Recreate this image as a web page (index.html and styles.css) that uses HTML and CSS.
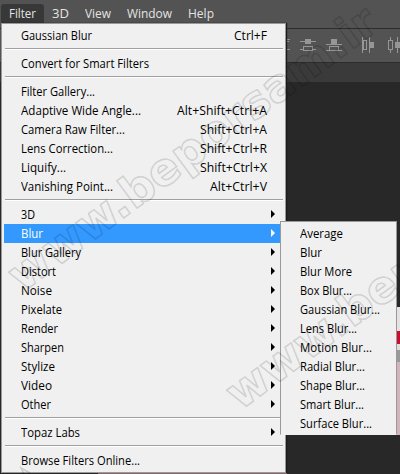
FILE: index.html
```html
<!DOCTYPE html>
<html lang="en"><head><meta charset="utf-8"><title>Filter</title><link rel="stylesheet" href="styles.css"></head>
<body>
<div class="app">
<nav class="bar"><span class="tab on"><span class="fit" data-w="27">Filter</span></span><span class="tab"><span class="fit" data-w="17">3D</span></span><span class="tab"><span class="fit" data-w="26">View</span></span><span class="tab"><span class="fit" data-w="45">Window</span></span><span class="tab"><span class="fit" data-w="26">Help</span></span></nav>
<div class="options">
<svg class="tools" width="114" height="33" viewBox="286 29 114 33" shape-rendering="crispEdges"><g fill="none" stroke="#969696"><path d="M286 39.5h4M286 41.5h3M286 49.5h4M300 41.5h16M300 49.500h3M313 49.500h3M303.500 46.500h9v4h-9zM326 44.500h16M329.500 46.500h9v4h-9zM326 50.500h16M362.500 37v16M363.500 40.500h3v9h-3zM369.500 37v16M390.500 37v3M390.500 50v3M388.500 40.500h4v9h-4zM397.500 37v16"/></g><path fill="#969696" d="M305 39h6v5h-6zM331 39h6v5h-6zM370 42h4v6h-4zM395 42h5v6h-5z"/></svg>
</div>
<div class="tabs"></div>
<div class="stage"><div class="photo"></div></div>
<div class="foot"></div>
<div class="menu main" id="main"></div>
<div class="menu sub" id="sub"></div>
<svg class="mark" width="400" height="474"><g class="mark-text"><text transform="translate(22 293) rotate(-36.4)" textLength="446">www.beporsam.ir</text><text transform="translate(240 411) rotate(-36.4)" textLength="446">www.beporsam.ir</text><path d="M24 474l-3-6 9 5"/></g></svg>
</div>
<script src="menu.js"></script>
</body></html>
```
FILE: styles.css
```css
body{margin:0}
.app{position:relative;width:400px;height:474px;overflow:hidden;background:#282828;font:12px/19px "Open Sans",sans-serif}
.bar{box-sizing:border-box;height:28px;padding:4px 0 0 1px;background:#535353;color:#e4e4e4;display:flex}
.tab{height:24px;line-height:20px;padding:0 8px}
.on{background:#383838;border-radius:3px 3px 0 0}
.options{box-sizing:border-box;height:35px;background:#535353;border-top:1px solid #2c2c2c;border-bottom:1px solid #2c2c2c;display:flex;justify-content:flex-end}
.tabs{height:19px;background:#3a3a3a}
.stage{height:353px;display:flex;justify-content:flex-end;align-items:flex-start}
.photo{width:3px;height:128px;margin-top:225px;background:linear-gradient(#e6e2e2 0 24px,#c8102e 24px 37px,#ddd 37px 43px,#999 43px 55px,#d3b3bc 55px)}
.foot{position:absolute;left:98px;top:435px;width:189px;height:39px;background:#a0757c}
.menu{position:absolute;box-sizing:border-box;background:#f0f0f0;border:1px solid #999;color:#000}
.main{left:1px;top:23px;width:285px;height:450px;padding:2px;box-shadow:1px 0 1px #1c1c1c}
.sub{left:280px;top:221px;width:117px;height:214px;padding:2px 0;border-bottom-color:#f0f0f0}
.row{display:flex;height:19px;padding:0 16px 0 17px;justify-content:space-between;position:relative}
.sub .row{padding:0 0 0 19px}
.fit{display:inline-block;white-space:nowrap;transform-origin:0 50%}
.active{background:#39f;color:#fff}
.arrow{width:4px;height:8px;margin:5px -8px 0 0;background:currentColor;clip-path:polygon(0 0,100% 50%,0 100%)}
.sep{box-sizing:border-box;height:9px;padding-top:3px}
.sep::before{content:"";display:block;height:1px;margin:0 0 0 1px;background:#a0a0a0;border-bottom:1px solid #fff}
.mark{position:absolute;left:0;top:0;pointer-events:none}
.mark-text{font:700 45px "DejaVu Sans",sans-serif;fill:none;stroke:#000;stroke-opacity:.15;stroke-width:1.6}
```
FILE: menu.js
```js
const mainItems = [
  ["Gaussian Blur", 71, "Ctrl+F", 33], null,
  ["Convert for Smart Filters", 128], null,
  ["Filter Gallery...", 74],
  ["Adaptive Wide Angle...", 120, "Alt+Shift+Ctrl+A", 90],
  ["Camera Raw Filter...", 104, "Shift+Ctrl+A", 67],
  ["Lens Correction...", 92, "Shift+Ctrl+R", 67],
  ["Liquify...", 45, "Shift+Ctrl+X", 67],
  ["Vanishing Point...", 92, "Alt+Ctrl+V", 57], null,
  ["3D", 14, ">"], ["Blur", 22, ">"], ["Blur Gallery", 60, ">"],
  ["Distort", 35, ">"], ["Noise", 31, ">"], ["Pixelate", 41, ">"],
  ["Render", 37, ">"], ["Sharpen", 43, ">"], ["Stylize", 34, ">"],
  ["Video", 31, ">"], ["Other", 30, ">"], null,
  ["Topaz Labs", 59, ">"], null,
  ["Browse Filters Online...", 119]
];
const subItems = [
  ["Average", 43], ["Blur", 22], ["Blur More", 52], ["Box Blur...", 52],
  ["Gaussian Blur...", 80], ["Lens Blur...", 57], ["Motion Blur...", 72],
  ["Radial Blur...", 65], ["Shape Blur...", 65], ["Smart Blur...", 64],
  ["Surface Blur...", 72]
];
const label = (text, width) => `<span class="fit" data-w="${width}">${text}</span>`;
const row = (item, active) => {
  if (!item) return '<div class="sep"></div>';
  const [text, width, extra, extraWidth] = item;
  const end = extra === ">" ? '<i class="arrow"></i>' : extra ? label(extra, extraWidth) : "";
  return `<div class="row${active ? " active" : ""}">${label(text, width)}${end}</div>`;
};
document.getElementById("main").innerHTML = mainItems.map(i => row(i, i && i[0] === "Blur")).join("");
document.getElementById("sub").innerHTML = subItems.map(i => row(i)).join("");
// Condense each label to its menu width; the box takes that width too.
document.querySelectorAll(".fit").forEach(el => {
  const natural = el.getBoundingClientRect().width;
  const target = Number(el.dataset.w);
  el.style.transform = `scaleX(${target / natural})`;
  el.style.width = natural + "px";
  el.style.marginRight = target - natural + "px";
});
```
